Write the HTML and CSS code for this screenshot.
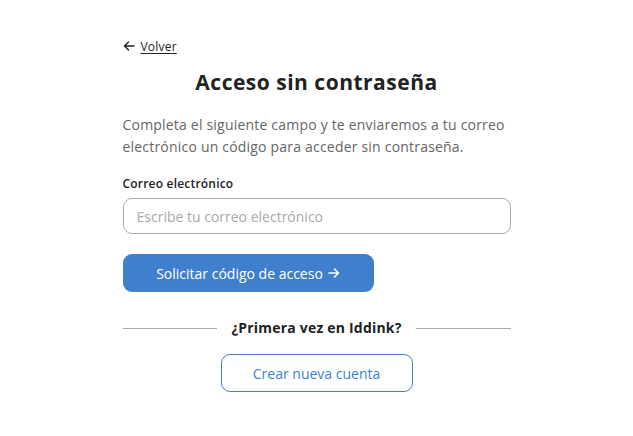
FILE: index.html
```html
<!DOCTYPE html>
<html lang="es">
<head>
<meta charset="utf-8">
<title>Acceso sin contraseña</title>
<link rel="stylesheet" href="styles.css">
</head>
<body>
<main class="page">
  <a class="back" href="#">
    <svg class="back-icon" viewBox="0 0 12 12" width="12" height="12" aria-hidden="true"><path d="M11 6H1.5M5.5 2 1.5 6l4 4" fill="none" stroke="#222" stroke-width="1.4" stroke-linecap="round" stroke-linejoin="round"/></svg>
    <span class="back-text">Volver</span>
  </a>
  <h1 class="title">Acceso sin contraseña</h1>
  <p class="intro">Completa el siguiente campo y te enviaremos a tu correo electrónico un código para acceder sin contraseña.</p>
  <label class="label" for="email">Correo electrónico</label>
  <input class="input" id="email" type="email" placeholder="Escribe tu correo electrónico">
  <button class="primary" type="button">Solicitar código de acceso <svg class="arrow" viewBox="0 0 12 12" width="12" height="12" aria-hidden="true"><path d="M1 6h9.5M6.5 2l4 4-4 4" fill="none" stroke="#fff" stroke-width="1.6" stroke-linecap="round" stroke-linejoin="round"/></svg></button>
  <div class="divider"><span class="line"></span><span class="divider-text">¿Primera vez en Iddink?</span><span class="line"></span></div>
  <div class="center"><button class="secondary" type="button">Crear nueva cuenta</button></div>
</main>
</body>
</html>
```
FILE: styles.css
```css
html, body { margin: 0; padding: 0; background: #fff; }
body { font-family: "Open Sans", "Noto Sans", sans-serif; color: #222; letter-spacing: 0.2px; }
.page { width: 388px; margin: 0 auto; padding-top: 38px; display: flex; flex-direction: column; }
.back { display: flex; align-items: center; gap: 6px; color: #222; text-decoration: none; font-size: 12px; height: 16px; }
.back-text { text-decoration: underline; text-underline-offset: 2px; }
.title { margin: 14px 0 0; text-align: center; font-size: 21px; font-weight: 700; line-height: 28px; color: #222; letter-spacing: 0.5px; }
.intro { margin: 18px 0 0; font-size: 14px; line-height: 22px; color: #666; }
.label { margin-top: 18px; font-size: 12px; font-weight: 600; line-height: 16px; color: #222; }
.input { margin-top: 6px; box-sizing: border-box; height: 36px; width: 100%; border: 1px solid #aaa; border-radius: 9px; padding: 0 13px; font: inherit; font-size: 14px; color: #222; outline: none; }
.input::placeholder { color: #aaa; }
.primary { margin-top: 20px; align-self: flex-start; box-sizing: border-box; height: 38px; width: 251px; border: 0; border-radius: 9px; background: #3f7fcc; color: #fff; font: inherit; font-size: 14px; display: flex; align-items: center; justify-content: center; gap: 5px; cursor: pointer; }
.divider { margin-top: 27px; display: flex; align-items: center; gap: 14px; }
.line { flex: 1; height: 1px; background: #aaa; }
.divider-text { font-size: 14px; font-weight: 700; color: #222; line-height: 18px; }
.center { margin-top: 17px; display: flex; justify-content: center; }
.secondary { box-sizing: border-box; height: 38px; width: 192px; border: 1px solid #3f7fcc; border-radius: 9px; background: #fff; color: #3f7fcc; font: inherit; font-size: 14px; cursor: pointer; }
```
